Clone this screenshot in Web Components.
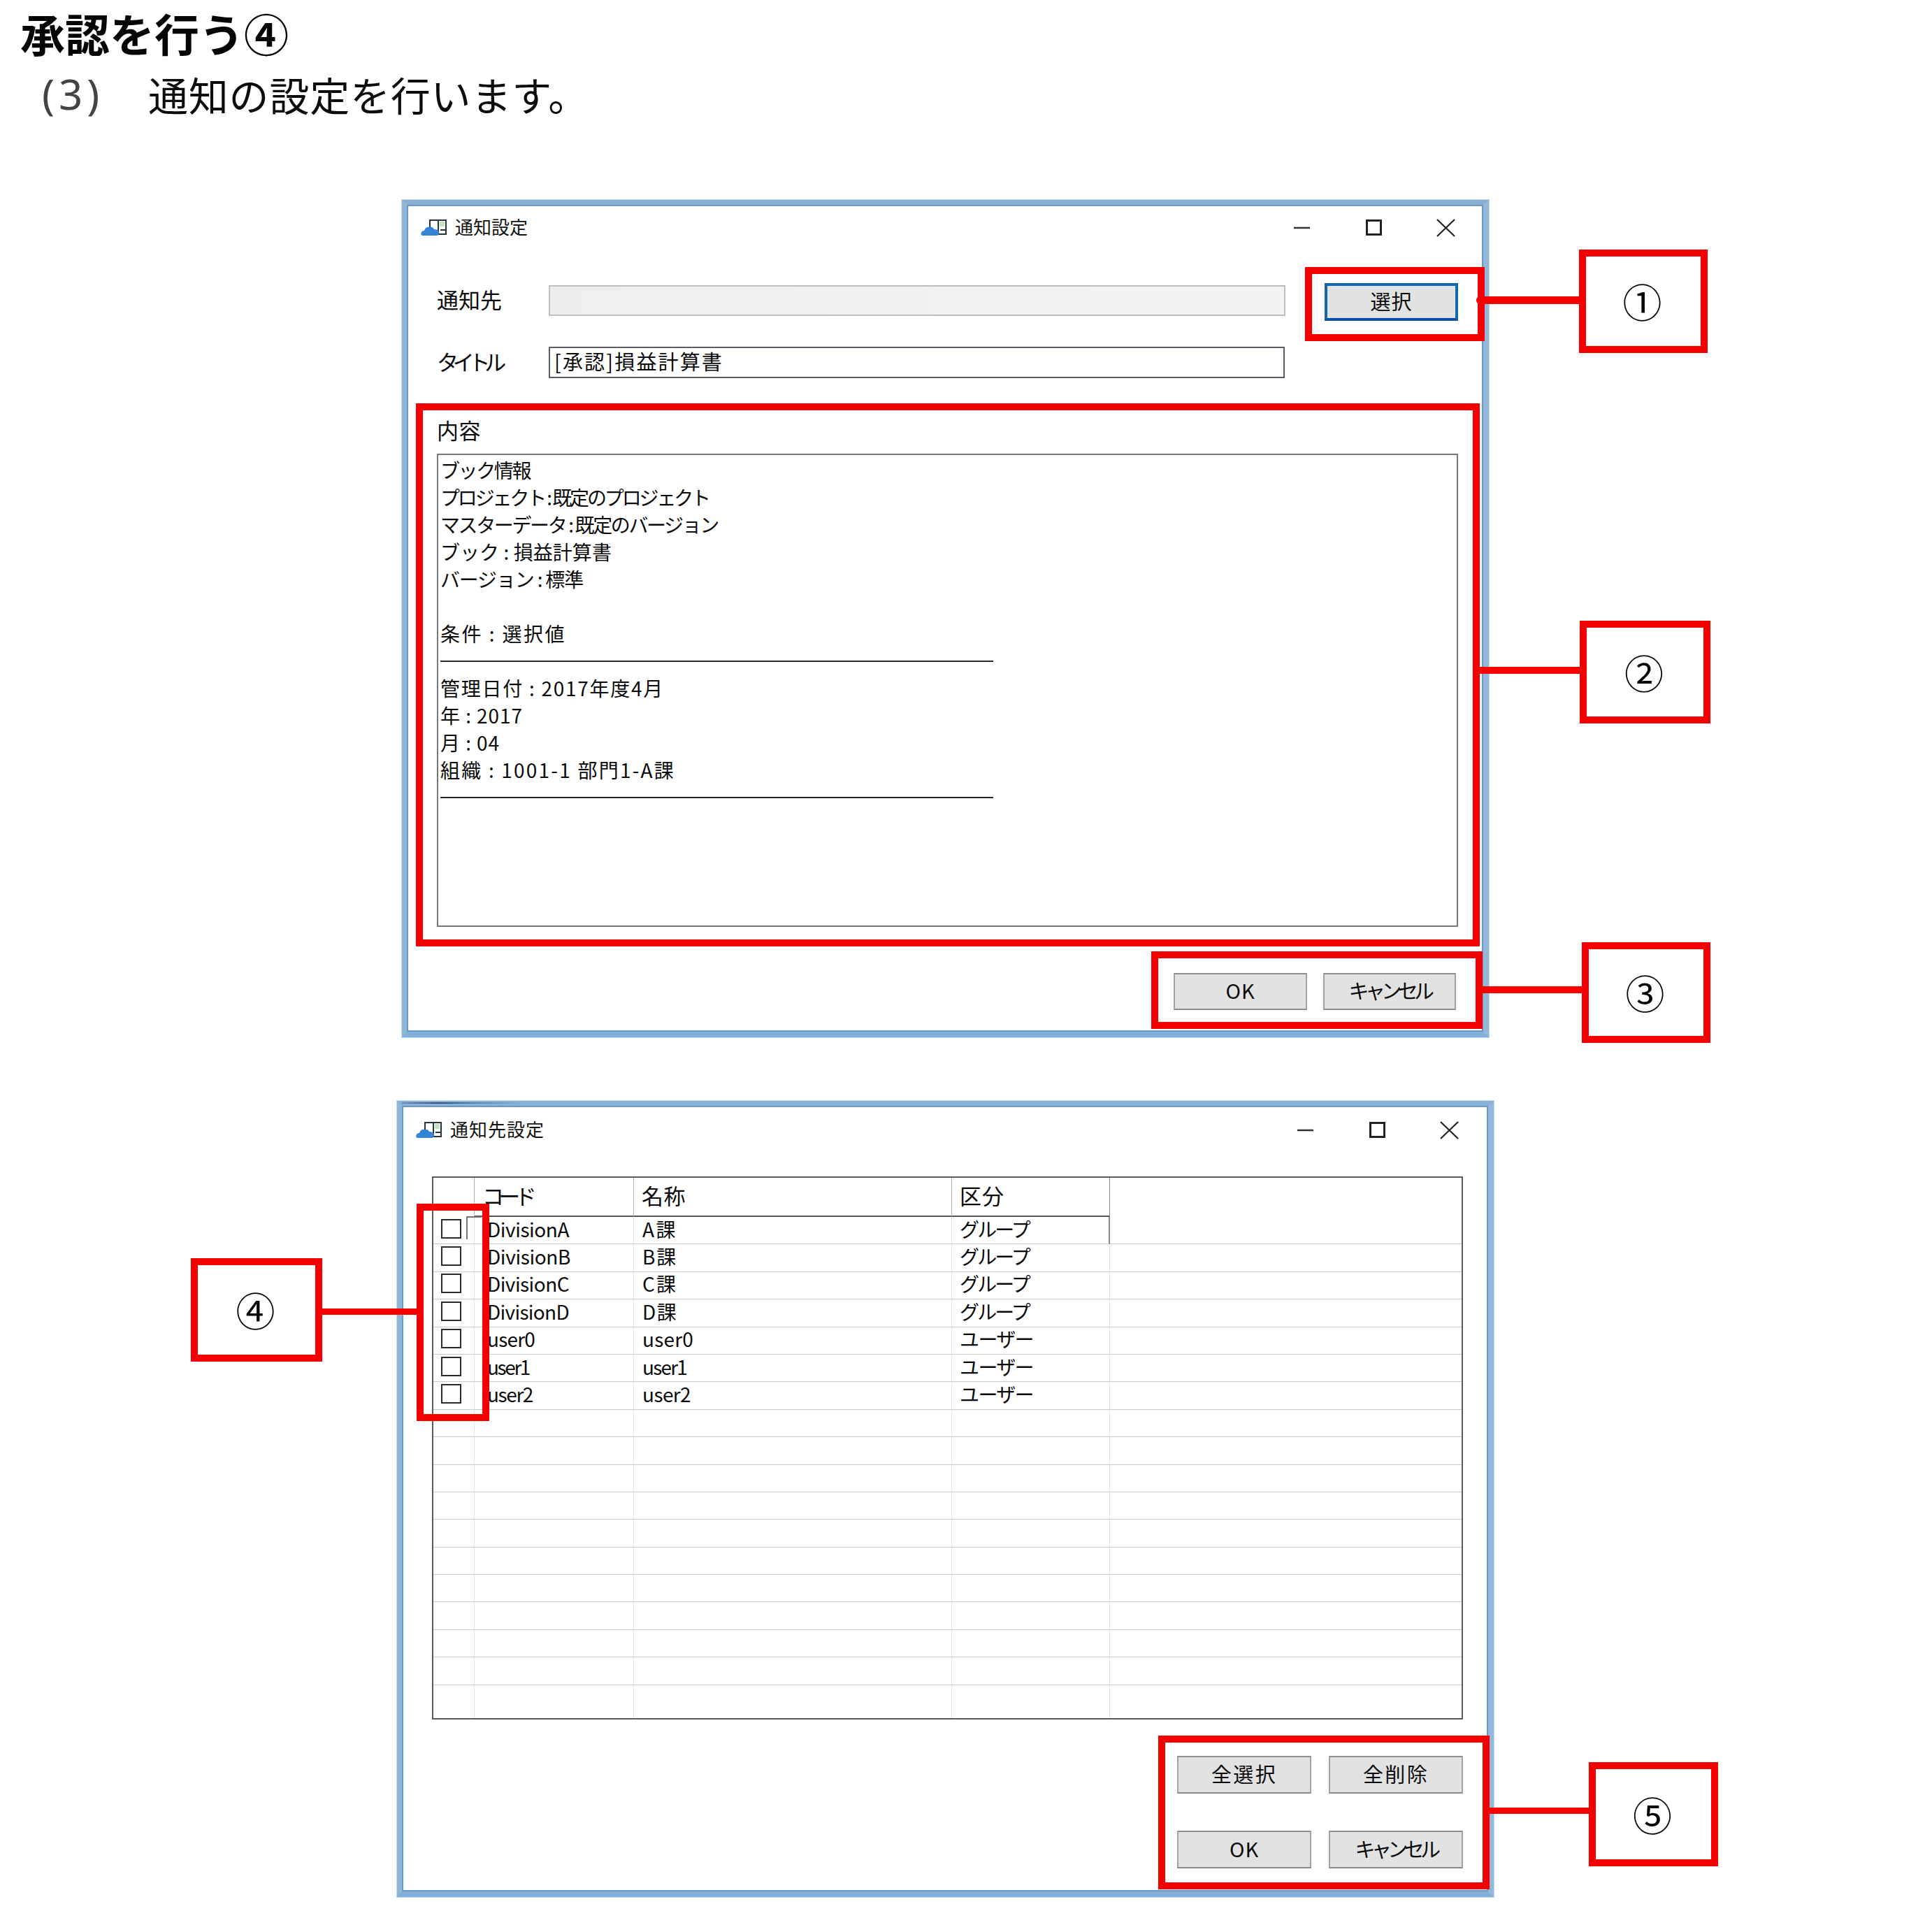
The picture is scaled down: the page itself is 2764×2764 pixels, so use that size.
<!DOCTYPE html>
<html lang="ja">
<head>
<meta charset="utf-8">
<title>承認を行う④</title>
<style>
  html,body{margin:0;padding:0;background:#fff}
  body{position:relative;width:2764px;height:2764px;overflow:hidden;color:#111;
    font-family:"Noto Sans CJK JP","Liberation Sans",sans-serif}
  .win1{margin-left:575px}
  .win2{margin-left:568px;margin-top:91px}
</style>
</head>
<body>

<doc-heading>
  <span slot="title">承認を行う④</span>
  <span slot="num">(3)</span>
  <span slot="sub">通知の設定を行います。</span>
</doc-heading>

<ui-window class="win1" name="通知設定" w="1555" h="1198" name-w="104" pad-right="0" bar="61">
  <notify-form></notify-form>
</ui-window>

<ui-window class="win2" name="通知先設定" w="1569" h="1139" name-w="135" pad-right="2" bar="65" speck>
  <recipient-form></recipient-form>
</ui-window>

<!-- annotations, placed on top of the screenshots -->
<red-mark x="1867" y="382" w="257" h="106"></red-mark>
<red-mark x="595" y="577" w="1522" h="777"></red-mark>
<red-mark x="1647" y="1361" w="474" h="111"></red-mark>
<red-mark x="596" y="1722" w="104" h="311"></red-mark>
<red-mark x="1657" y="2483" w="474" h="220"></red-mark>

<red-mark solid round x="2112" y="424" w="147" h="11"></red-mark>
<red-mark solid x="2117" y="954" w="143" h="10"></red-mark>
<red-mark solid x="2121" y="1411" w="142" h="10"></red-mark>
<red-mark solid x="461" y="1872" w="135" h="9"></red-mark>
<red-mark solid x="2131" y="2586" w="142" h="9"></red-mark>

<ui-callout x="2259" y="357" w="184" h="148">①</ui-callout>
<ui-callout x="2260" y="888" w="187" h="147">②</ui-callout>
<ui-callout x="2263" y="1348" w="184" h="144">③</ui-callout>
<ui-callout x="273" y="1800" w="188" h="148">④</ui-callout>
<ui-callout x="2273" y="2521" w="185" h="149">⑤</ui-callout>

<script>
class DocHeading extends HTMLElement{
  constructor(){
    super();
    this.attachShadow({mode:"open"}).innerHTML=`
      <style>
        :host{display:block;height:286px;box-sizing:border-box;padding:15px 0 0 29px}
        .t{font-size:64px;line-height:62px;font-weight:700;color:#050505;white-space:nowrap}
        .s{display:flex;margin-top:28px;margin-left:31px;height:58px;align-items:center;white-space:nowrap}
        .n{width:152px;font-size:60px;color:#444;letter-spacing:6px;font-family:"Noto Sans",sans-serif}
        .b{font-size:57px;color:#0c0c0c;letter-spacing:.8px}
      </style>
      <div class="t"><slot name="title"></slot></div>
      <div class="s"><span class="n"><slot name="num"></slot></span><span class="b"><slot name="sub"></slot></span></div>`;
  }
}

class UiWindow extends HTMLElement{
  constructor(){
    super();
    const name=this.getAttribute("name");
    this.attachShadow({mode:"open"}).innerHTML=`
      <style>
        :host{display:block;box-sizing:border-box;position:relative;background:#fff;
          width:${this.getAttribute("w")}px;height:${this.getAttribute("h")}px;
          border-style:solid;border-width:7px 8px 8px 7px;padding:2px;
          border-color:#8ab0d6 #93b8dc #7fb0dc #8fb8d8;
          box-shadow:inset 0 0 0 2px #6c97c0,0 0 0 1px #c4dbec}
        .bar{display:flex;align-items:center;height:${this.getAttribute("bar")}px;padding:0 ${this.getAttribute("pad-right")}px 0 18px}
        .ico{width:37px;height:23px;margin-right:12px}
        .name{font-size:26px;color:#111}
        .ctl{display:flex;margin-left:auto}
        .ctl svg{width:103px;height:26px}
        .speck{position:absolute;left:0;top:-5px;width:172px;height:2px;
          background:linear-gradient(90deg,#6f90b5,#2f4f80 30%,#5f82ab 60%,#8ab0d6)}
      </style>
      ${this.hasAttribute("speck")?'<i class="speck"></i>':''}
      <div class="bar">
        <svg class="ico" viewBox="0 0 37 23">
          <rect x="13" y="1" width="23" height="20" fill="#fff" stroke="#26363f" stroke-width="2"/>
          <path d="M25 1v20" stroke="#26363f" stroke-width="2"/>
          <path d="M27 3h7v7h-7z" fill="#c6e2bc"/>
          <path d="M28 15h7" stroke="#26363f" stroke-width="2"/>
          <path d="M2 23c-3-1-2-7 3-7 1-4 4-6 8-5 2-1 5 0 6 3 3 0 7 1 7 5 0 3-2 4-3 4z" fill="#3584d8"/>
        </svg>
        <fit-text class="name" w="${this.getAttribute("name-w")}">${name}</fit-text>
        <div class="ctl">
          <svg viewBox="0 0 103 26"><path d="M40 13h23" stroke="#333" stroke-width="2.500"/></svg>
          <svg viewBox="0 0 103 26"><rect x="41.500" y="2.500" width="20" height="20" fill="none" stroke="#222" stroke-width="3"/></svg>
          <svg viewBox="0 0 103 26"><path d="M39 1l25 24M64 1L39 25" fill="none" stroke="#222" stroke-width="2.200"/></svg>
        </div>
      </div>
      <slot></slot>`;
  }
}

class UiButton extends HTMLElement{
  constructor(){
    super();
    this.attachShadow({mode:"open"}).innerHTML=`
      <style>
        :host{display:flex;align-items:center;justify-content:center;box-sizing:border-box;
          width:${this.getAttribute("w")||191}px;height:${this.getAttribute("h")||53}px;
          background:#e2e2e2;border:2px solid #a2a2a2;border-top-color:#8f8f8f;border-bottom-color:#8a8a8a;
          font-size:29px;color:#0a0a0a}
        :host([primary]){border:4px solid #1264b4;border-bottom-color:#0b50a8;background:#e1e3e3}
      </style>
      <slot></slot>`;
  }
}

class UiField extends HTMLElement{
  constructor(){
    super();
    this.attachShadow({mode:"open"}).innerHTML=`
      <style>
        :host{display:flex;align-items:center;box-sizing:border-box;padding-left:6px;
          width:${this.getAttribute("w")}px;height:${this.getAttribute("h")}px;
          background:#fff;border:2px solid #5c5c66;font-size:29px;color:#0a0a0a}
        :host([disabled]){background:linear-gradient(90deg,#eeeeee,#f3f3f3);border-color:#bdbdc2}
      </style>
      <slot></slot>`;
  }
}

class UiMemo extends HTMLElement{
  constructor(){
    super();
    this.attachShadow({mode:"open"}).innerHTML=`
      <style>
        :host{display:grid;box-sizing:border-box;grid-auto-rows:39px;align-content:start;justify-items:start;
          padding:2px 0 0 3px;height:677px;background:#fff;border:2px solid #77777f;font-size:28px;line-height:39px;color:#0a0a0a}
        ::slotted(hr){width:791px;height:2px;margin:0;border:0;background:#25252c;align-self:center}
      </style>
      <slot></slot>`;
  }
}

class NotifyForm extends HTMLElement{
  constructor(){
    super();
    this.attachShadow({mode:"open"}).innerHTML=`
      <style>
        :host{display:block;padding:49px 34px 0 41px;font-size:31px;color:#0a0a0a}
        .row{display:flex;align-items:center;height:45px}
        .r1{height:54px}
        .row+.row{margin-top:37px}
        .lab{width:160px;flex:none}
        .up{margin-bottom:4px}
        .sel{margin-left:56px}
        .top{margin-top:57px;height:38px;display:flex;align-items:center}
        .memo{margin-top:13px}
        .foot{display:flex;justify-content:flex-end;gap:23px;margin:66px 3px 0 0}
      </style>
      <div class="row r1">
        <div class="lab up"><fit-text w="93">通知先</fit-text></div>
        <ui-field class="up" disabled w="1054" h="44"></ui-field>
        <ui-button class="sel" primary w="191" h="54"><fit-text w="60">選択</fit-text></ui-button>
      </div>
      <div class="row">
        <div class="lab"><fit-text w="91">タイトル</fit-text></div>
        <ui-field w="1053" h="45"><fit-text w="242">[承認]損益計算書</fit-text></ui-field>
      </div>
      <div class="top"><fit-text w="63">内容</fit-text></div>
      <ui-memo class="memo">
        <fit-text w="128">ブック情報</fit-text>
        <fit-text w="384">プロジェクト : 既定のプロジェクト</fit-text>
        <fit-text w="397">マスターデータ : 既定のバージョン</fit-text>
        <fit-text w="245">ブック : 損益計算書</fit-text>
        <fit-text w="204">バージョン : 標準</fit-text>
        <span></span>
        <fit-text w="180">条件 : 選択値</fit-text>
        <hr>
        <fit-text w="320">管理日付 : 2017年度4月</fit-text>
        <fit-text w="118">年 : 2017</fit-text>
        <fit-text w="85">月 : 04</fit-text>
        <fit-text w="336">組織 : 1001-1 部門1-A課</fit-text>
        <hr>
      </ui-memo>
      <div class="foot">
        <ui-button w="191"><fit-text w="42">OK</fit-text></ui-button>
        <ui-button w="190"><fit-text w="117">キャンセル</fit-text></ui-button>
      </div>`;
  }
}

const RECIPIENTS=[
  ["DivisionA",117,"A課",50,"グループ",99],
  ["DivisionB",119,"B課",50,"グループ",99],
  ["DivisionC",117,"C課",50,"グループ",99],
  ["DivisionD",117,"D課",50,"グループ",99],
  ["user0",68,"user0",73,"ユーザー",105],
  ["user1",60,"user1",63,"ユーザー",105],
  ["user2",65,"user2",69,"ユーザー",105]
];

class UiGrid extends HTMLElement{
  constructor(){
    super();
    let cells=`
      <div class="c h a"></div>
      <div class="c h b"><fit-text w="70">コード</fit-text></div>
      <div class="c h b n"><fit-text w="63">名称</fit-text></div>
      <div class="c h b k"><fit-text w="64">区分</fit-text></div>
      <div class="c h x"></div>`;
    for(let i=0;i<18;i++){
      const r=RECIPIENTS[i];
      const last=i==17?" end":"";
      if(r){
        cells+=`
          <div class="c a">${i==0?'<i class="mark"></i>':''}<span class="cb"></span></div>
          <div class="c t"><fit-text w="${r[1]}">${r[0]}</fit-text></div>
          <div class="c n"><fit-text w="${r[3]}">${r[2]}</fit-text></div>
          <div class="c k${i==0?' dark':''}"><fit-text w="${r[5]}">${r[4]}</fit-text></div>
          <div class="c x"></div>`;
      }else{
        cells+=`<div class="c a${last}"></div><div class="c${last}"></div><div class="c${last}"></div><div class="c${last}"></div><div class="c x${last}"></div>`;
      }
    }
    this.attachShadow({mode:"open"}).innerHTML=`
      <style>
        :host{display:grid;box-sizing:border-box;height:777px;border:2px solid #5a5a62;background:#fff;
          grid-template-columns:59px 228px 455px 226px 1fr;
          grid-template-rows:56px repeat(17,39.4px) 1fr;font-size:28px;color:#0a0a0a}
        .c{position:relative;box-sizing:border-box;display:flex;align-items:center;
          border-right:1px solid #e4e4e4;border-bottom:1px solid #c9c9cd;min-width:0}
        .x{border-right:0}
        .end{border-bottom:0}
        .t{padding-left:18px}
        .n{padding-left:12px}
        .k{padding-left:11px}
        .h{font-size:31px;border-right-color:#b5b5b5;border-bottom:0}
        .h.b{padding-left:11px;border-bottom:2px solid #55555c}
        .h.k{border-right:1px solid #8a8a8a}
        .dark{border-right:2px solid #8a8a8a}
        .cb{box-sizing:border-box;width:29px;height:28px;margin:-5px 0 0 11px;border:2.500px solid #2c2c2c;background:#fff}
        .mark{position:absolute;left:47px;top:-1px;width:20px;height:31px;border-left:2px solid #777;border-top:2px solid #777}
      </style>
      ${cells}`;
  }
}

class RecipientForm extends HTMLElement{
  constructor(){
    super();
    this.attachShadow({mode:"open"}).innerHTML=`
      <style>
        :host{display:block;padding:34px 34px 0 41px}
        .btns{display:grid;grid-template-columns:192px 192px;grid-template-rows:54px 54px;gap:53px 25px;
          justify-content:end;margin-top:52px}
      </style>
      <ui-grid></ui-grid>
      <div class="btns">
        <ui-button w="192" h="54"><fit-text w="94">全選択</fit-text></ui-button>
        <ui-button w="192" h="54"><fit-text w="94">全削除</fit-text></ui-button>
        <ui-button w="192" h="54"><fit-text w="42">OK</fit-text></ui-button>
        <ui-button w="192" h="54"><fit-text w="117">キャンセル</fit-text></ui-button>
      </div>`;
  }
}

function place(el){
  const s=el.style;
  s.left=el.getAttribute("x")+"px";
  s.top=el.getAttribute("y")+"px";
  s.width=el.getAttribute("w")+"px";
  s.height=el.getAttribute("h")+"px";
}

class RedMark extends HTMLElement{
  constructor(){
    super();
    this.attachShadow({mode:"open"}).innerHTML=`
      <style>
        :host{position:absolute;box-sizing:border-box;border:10px solid #f40000}
        :host([solid]){border:0;background:#f80000}
        :host([round]){border-radius:6px 0 0 6px}
      </style>`;
  }
  connectedCallback(){place(this)}
}

class UiCallout extends HTMLElement{
  constructor(){
    super();
    this.attachShadow({mode:"open"}).innerHTML=`
      <style>
        :host{position:absolute;box-sizing:border-box;display:flex;align-items:center;justify-content:center;
          background:#fff;border:10px solid #f40000;padding:0 3px 3px 0;font-size:56px;color:#050505}
      </style>
      <slot></slot>`;
  }
  connectedCallback(){place(this)}
}

// text in the reference is squeezed or stretched per line: spread it to the measured width
class FitText extends HTMLElement{
  constructor(){
    super();
    this.attachShadow({mode:"open"}).innerHTML=`
      <style>:host{display:inline-block;white-space:nowrap;padding-bottom:5px}</style><slot></slot>`;
  }
  connectedCallback(){
    const w=+this.getAttribute("w"),now=this.getBoundingClientRect().width;
    if(w&&now) this.style.letterSpacing=((w-now)/this.textContent.length)+"px";
  }
}

customElements.define("doc-heading",DocHeading);
customElements.define("ui-window",UiWindow);
customElements.define("ui-button",UiButton);
customElements.define("ui-field",UiField);
customElements.define("ui-memo",UiMemo);
customElements.define("ui-grid",UiGrid);
customElements.define("notify-form",NotifyForm);
customElements.define("recipient-form",RecipientForm);
customElements.define("red-mark",RedMark);
customElements.define("ui-callout",UiCallout);
customElements.define("fit-text",FitText);
</script>
</body>
</html>
